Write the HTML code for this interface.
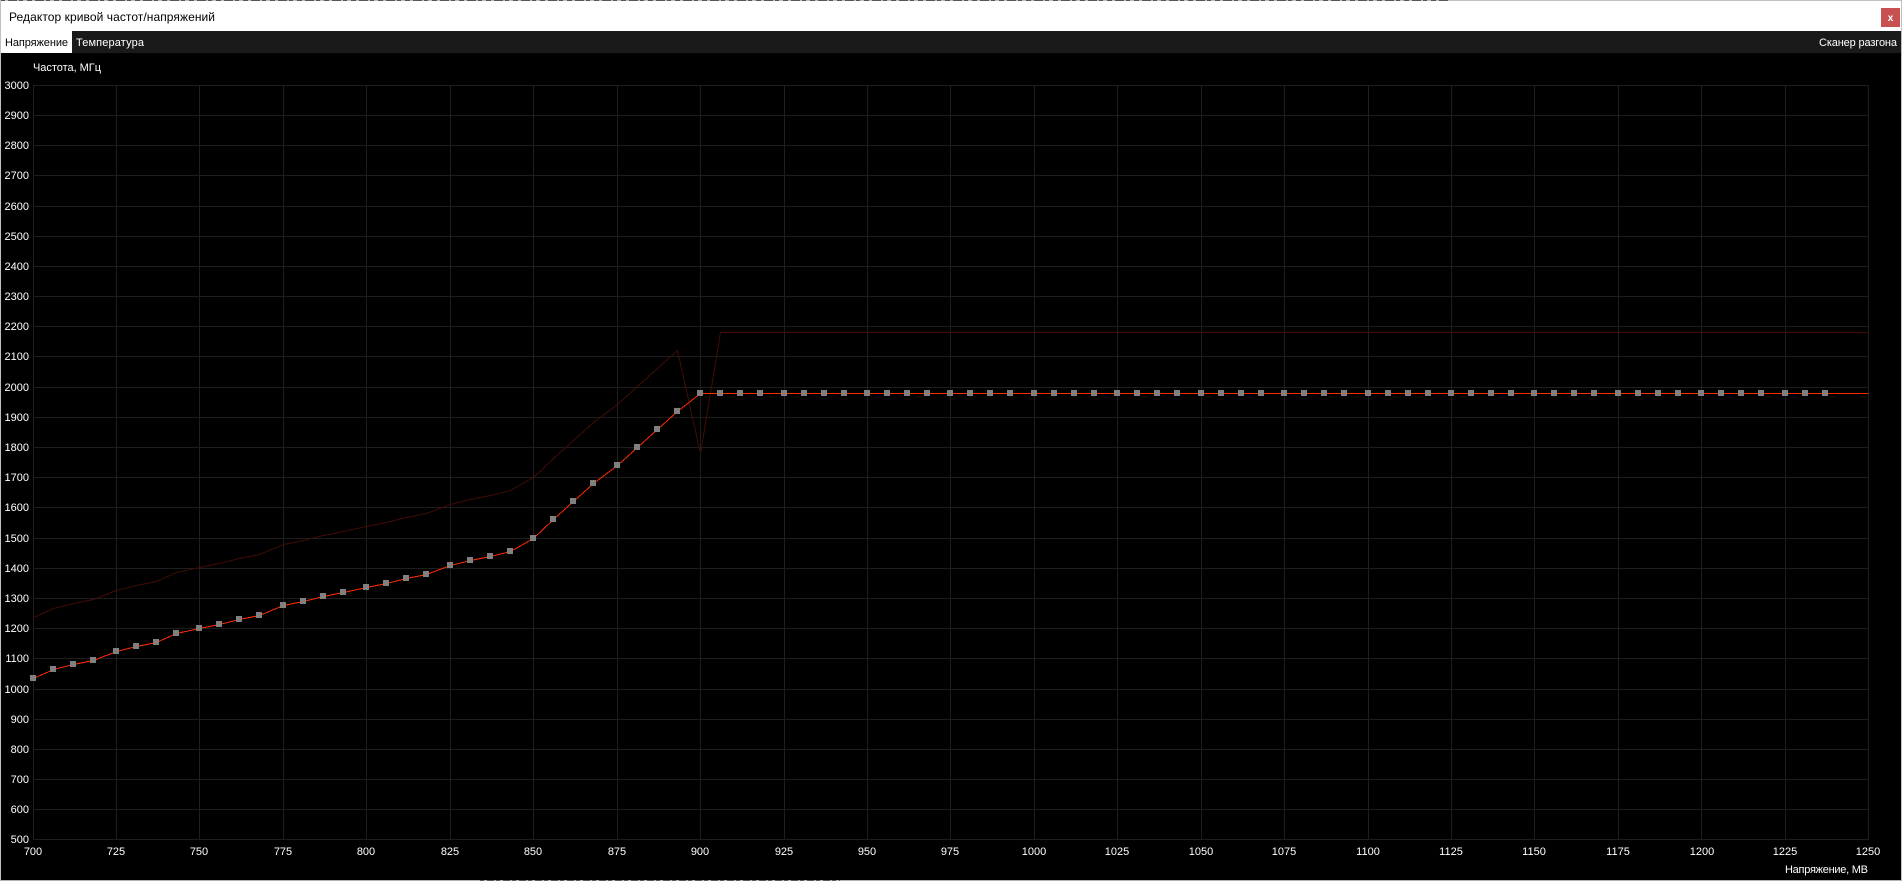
<!DOCTYPE html>
<html lang="ru"><head><meta charset="utf-8"><title>Редактор кривой частот/напряжений</title>
<style>
html,body{margin:0;padding:0;background:#000;width:1902px;height:881px;overflow:hidden}
svg{display:block}
text{font-family:"Liberation Sans","Noto Sans CJK SC",sans-serif;font-size:11px;fill:#fff}
.r text{text-anchor:end}
.c text{text-anchor:middle}
</style></head><body>
<svg width="1902" height="881" viewBox="0 0 1902 881" xmlns="http://www.w3.org/2000/svg">
<rect width="1902" height="881" fill="#000"/>
<rect x="1" y="1" width="1900" height="30" fill="#fff"/>
<rect x="1" y="31" width="1900" height="22" fill="#1a1a1a"/>
<rect x="1" y="31" width="71" height="22" fill="#fff"/>
<rect x="0" y="0" width="1902" height="1" fill="#c0c0c0"/>
<path d="M0 .5H1450" stroke="#5a5654" stroke-width="1" stroke-dasharray="5 3 9 2 4 4" shape-rendering="crispEdges" fill="none"/>
<rect x="0" y="0" width="1" height="881" fill="#c0c0c0"/>
<rect x="1901" y="0" width="1" height="881" fill="#c0c0c0"/>
<rect x="0" y="880" width="1902" height="1" fill="#b4b4b4"/>
<path d="M480 880.5H840" stroke="#5a5654" stroke-width="1" stroke-dasharray="4 3 7 2" shape-rendering="crispEdges" fill="none"/>
<rect x="1881" y="8" width="19" height="19" fill="#c75050"/>
<text x="1890.5" y="21" text-anchor="middle" style="font-weight:bold;font-size:10px">x</text>
<text x="9" y="21" textLength="206" lengthAdjust="spacing" style="font-size:12px;fill:#000">Редактор кривой частот/напряжений</text>
<text x="5" y="46" textLength="63" lengthAdjust="spacing" style="fill:#000">Напряжение</text>
<text x="76" y="46" textLength="68" lengthAdjust="spacing">Температура</text>
<text x="1819" y="46" textLength="78" lengthAdjust="spacing">Сканер разгона</text>
<text x="33" y="71" textLength="68" lengthAdjust="spacing">Частота, МГц</text>

<path fill="none" stroke="#1e1e1e" stroke-width="1" shape-rendering="crispEdges" d="M33 85.5H1869M33 115.5H1869M33 145.5H1869M33 175.5H1869M33 206.5H1869M33 236.5H1869M33 266.5H1869M33 296.5H1869M33 326.5H1869M33 356.5H1869M33 387.5H1869M33 417.5H1869M33 447.5H1869M33 477.5H1869M33 507.5H1869M33 538.5H1869M33 568.5H1869M33 598.5H1869M33 628.5H1869M33 658.5H1869M33 689.5H1869M33 719.5H1869M33 749.5H1869M33 779.5H1869M33 809.5H1869M33 839.5H1869
M33.5 85V840M116.5 85V840M199.5 85V840M283.5 85V840M366.5 85V840M450.5 85V840M533.5 85V840M617.5 85V840M700.5 85V840M784.5 85V840M867.5 85V840M950.5 85V840M1034.5 85V840M1117.5 85V840M1201.5 85V840M1284.5 85V840M1368.5 85V840M1451.5 85V840M1534.5 85V840M1618.5 85V840M1701.5 85V840M1785.5 85V840M1868.5 85V840"/>

<polyline transform="translate(.5 .5)" fill="none" stroke="#3f0d05" stroke-width="1" shape-rendering="crispEdges" points="33,617 53,608 73,603 93,599 116,590 136,585 156,581 176,572 199,567 219,563 239,558 259,554 283,544 303,540 323,535 343,531 366,526 386,522 406,517 426,513 450,504 470,499 490,495 510,490 533,477 553,458 573,440 593,422 617,404 637,386 657,368 677,350 700,453 720,332 1868,332"/>
<polyline transform="translate(.5 .5)" fill="none" stroke="#ff2a00" stroke-width="1" shape-rendering="crispEdges" points="33,678 53,669 73,664 93,660 116,651 136,646 156,642 176,633 199,628 219,624 239,619 259,615 283,605 303,601 323,596 343,592 366,587 386,583 406,578 426,574 450,565 470,560 490,556 510,551 533,538 553,519 573,501 593,483 617,465 637,447 657,429 677,411 700,393 1868,393"/>

<path fill="#808080" shape-rendering="crispEdges" d="M30 675h6v6h-6zM50 666h6v6h-6zM70 661h6v6h-6zM90 657h6v6h-6zM113 648h6v6h-6zM133 643h6v6h-6zM153 639h6v6h-6zM173 630h6v6h-6zM196 625h6v6h-6zM216 621h6v6h-6zM236 616h6v6h-6zM256 612h6v6h-6zM280 602h6v6h-6zM300 598h6v6h-6zM320 593h6v6h-6zM340 589h6v6h-6zM363 584h6v6h-6zM383 580h6v6h-6zM403 575h6v6h-6zM423 571h6v6h-6zM447 562h6v6h-6zM467 557h6v6h-6zM487 553h6v6h-6zM507 548h6v6h-6zM530 535h6v6h-6zM550 516h6v6h-6zM570 498h6v6h-6zM590 480h6v6h-6zM614 462h6v6h-6zM634 444h6v6h-6zM654 426h6v6h-6zM674 408h6v6h-6z
M697 390h6v6h-6zM717 390h6v6h-6zM737 390h6v6h-6zM757 390h6v6h-6zM781 390h6v6h-6zM801 390h6v6h-6zM821 390h6v6h-6zM841 390h6v6h-6zM864 390h6v6h-6zM884 390h6v6h-6zM904 390h6v6h-6zM924 390h6v6h-6zM947 390h6v6h-6zM967 390h6v6h-6zM987 390h6v6h-6zM1007 390h6v6h-6zM1031 390h6v6h-6zM1051 390h6v6h-6zM1071 390h6v6h-6zM1091 390h6v6h-6zM1114 390h6v6h-6zM1134 390h6v6h-6zM1154 390h6v6h-6zM1174 390h6v6h-6zM1198 390h6v6h-6zM1218 390h6v6h-6zM1238 390h6v6h-6zM1258 390h6v6h-6zM1281 390h6v6h-6zM1301 390h6v6h-6zM1321 390h6v6h-6zM1341 390h6v6h-6zM1365 390h6v6h-6zM1385 390h6v6h-6zM1405 390h6v6h-6zM1425 390h6v6h-6zM1448 390h6v6h-6zM1468 390h6v6h-6zM1488 390h6v6h-6zM1508 390h6v6h-6zM1531 390h6v6h-6zM1551 390h6v6h-6zM1571 390h6v6h-6zM1591 390h6v6h-6zM1615 390h6v6h-6zM1635 390h6v6h-6zM1655 390h6v6h-6zM1675 390h6v6h-6zM1698 390h6v6h-6zM1718 390h6v6h-6zM1738 390h6v6h-6zM1758 390h6v6h-6zM1782 390h6v6h-6zM1802 390h6v6h-6zM1822 390h6v6h-6z"/>

<g class="r">
<text x="29" y="89">3000</text><text x="29" y="119">2900</text><text x="29" y="149">2800</text><text x="29" y="179">2700</text><text x="29" y="210">2600</text><text x="29" y="240">2500</text><text x="29" y="270">2400</text><text x="29" y="300">2300</text><text x="29" y="330">2200</text><text x="29" y="360">2100</text><text x="29" y="391">2000</text><text x="29" y="421">1900</text><text x="29" y="451">1800</text><text x="29" y="481">1700</text><text x="29" y="511">1600</text><text x="29" y="542">1500</text><text x="29" y="572">1400</text><text x="29" y="602">1300</text><text x="29" y="632">1200</text><text x="29" y="662">1100</text><text x="29" y="693">1000</text><text x="29" y="723">900</text><text x="29" y="753">800</text><text x="29" y="783">700</text><text x="29" y="813">600</text><text x="29" y="843">500</text>
</g>
<g class="c">
<text x="33" y="855">700</text><text x="116" y="855">725</text><text x="199" y="855">750</text><text x="283" y="855">775</text><text x="366" y="855">800</text><text x="450" y="855">825</text><text x="533" y="855">850</text><text x="617" y="855">875</text><text x="700" y="855">900</text><text x="784" y="855">925</text><text x="867" y="855">950</text><text x="950" y="855">975</text><text x="1034" y="855">1000</text><text x="1117" y="855">1025</text><text x="1201" y="855">1050</text><text x="1284" y="855">1075</text><text x="1368" y="855">1100</text><text x="1451" y="855">1125</text><text x="1534" y="855">1150</text><text x="1618" y="855">1175</text><text x="1702" y="855">1200</text><text x="1785" y="855">1225</text><text x="1868" y="855">1250</text>
</g>
<text x="1785" y="873" textLength="83" lengthAdjust="spacing">Напряжение, МВ</text>
</svg>
</body></html>
